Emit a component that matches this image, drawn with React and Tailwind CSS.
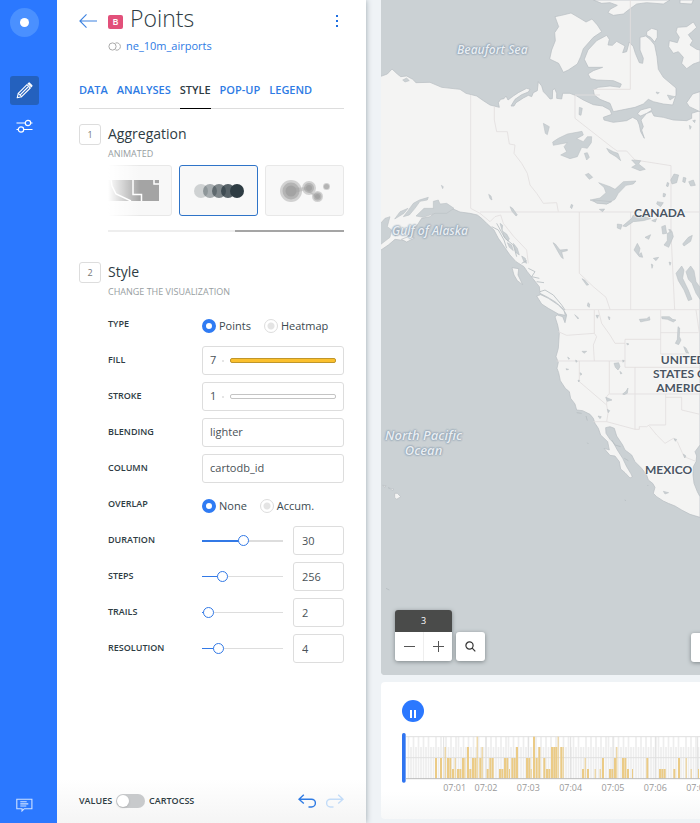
import React, { useState } from "react";

const FONT = "font-['Open_Sans','Noto_Sans',sans-serif]";

/* ---------- Left rail ---------- */

function Sidebar() {
  return (
    <nav className="z-20 flex w-[57px] shrink-0 flex-col items-start bg-[#2b78ff] px-[10px] pt-2 pb-1" aria-label="Main">
      <a href="#home" aria-label="Home" className="flex h-[29px] w-[29px] items-center justify-center rounded-full bg-[#4a90ff]">
        <span className="h-[9px] w-[9px] rounded-full bg-white" />
      </a>
      <button type="button" aria-label="Edit" className="mt-[39px] flex h-[29px] w-[29px] items-center justify-center rounded-[3px] bg-[#2461be]">
        <svg width="17" height="17" viewBox="0 0 17 17" fill="none" stroke="#fff" strokeWidth="1.1" strokeLinejoin="round" strokeLinecap="round">
          <path d="M1.2 15.8 2.3 11.4 11 2.7 14.3 6 5.6 14.7Z" />
          <path d="M2.3 11.4 5.6 14.7M4.2 12.8 12 5" />
          <path d="M12.2 1.5 13.2.9 16 3.7 15.4 4.8Z" fill="#fff" />
        </svg>
      </button>
      <button type="button" aria-label="Settings" className="mt-[7px] flex h-[29px] w-[29px] items-center justify-center">
        <svg width="17" height="15" viewBox="0 0 17 15" fill="none" stroke="#fff" strokeWidth="1.2">
          <path d="M.5 4h8.7M14.7 4h1.8M.5 10.5h1.8M7.8 10.5h8.7" />
          <circle cx="12" cy="4" r="2.7" />
          <circle cx="5" cy="10.5" r="2.7" />
        </svg>
      </button>
      <button type="button" aria-label="Feedback" className="mt-auto flex h-[29px] w-[29px] items-center justify-center">
        <svg width="17" height="14" viewBox="0 0 17 14" fill="none" stroke="#cfe1ff" strokeWidth="1.1">
          <path d="M.8 1.2h15.1v9.5H8.3L6 13V10.700H.8Z" />
          <path d="M4.300 3.800h6.400M4.300 5.900h8M4.300 8h6" />
        </svg>
      </button>
    </nav>
  );
}

/* ---------- Panel pieces ---------- */

const TABS = ["DATA", "ANALYSES", "STYLE", "POP-UP", "LEGEND"];

function Header() {
  return (
    <header className="flex h-[57px] items-start pt-[5px]">
      <button type="button" aria-label="Back" className="mt-[9px] w-[29px]">
        <svg width="18" height="14" viewBox="0 0 18 14" fill="none" stroke="#3d82e0" strokeWidth="1.100">
          <path d="M18 7H.9M7.500.4.9 7l6.600 6.600" />
        </svg>
      </button>
      <div className="min-w-0 flex-1">
        <div className="flex h-[26px] items-center gap-[7px]">
          <span className="mt-[8px] flex h-[14px] w-[15px] items-center justify-center rounded-[2px] bg-[#e2507a] text-[9px] font-semibold text-white">B</span>
          <h1 className="text-[23px] leading-[26px] font-light text-[#2e3c43]">Points</h1>
        </div>
        <div className="mt-[7px] flex h-4 items-center gap-[5px] text-[11px] leading-4">
          <svg width="13" height="9" viewBox="0 0 13 9" fill="none" stroke="#aaa">
            <circle cx="4.500" cy="4.500" r="3.600" />
            <path d="M7.500 1a3.700 3.700 0 1 1 0 7" />
          </svg>
          <a href="#dataset" className="text-[#2e7be4]">ne_10m_airports</a>
        </div>
      </div>
      <button type="button" aria-label="More options" className="mt-[10px] flex w-[14px] flex-col items-center gap-[3px]">
        <span className="h-[2px] w-[2px] bg-[#1f6fe0]" />
        <span className="h-[2px] w-[2px] bg-[#1f6fe0]" />
        <span className="h-[2px] w-[2px] bg-[#1f6fe0]" />
      </button>
    </header>
  );
}

function Tabs() {
  return (
    <div className="mt-[23px] flex h-[29px] gap-[9px] border-b border-[#ddd] text-[11px] leading-5 font-semibold">
      {TABS.map((t) => (
        <button
          key={t}
          type="button"
          className={t === "STYLE" ? "-mb-px border-b border-black pb-2 text-[#2e3c43]" : "pb-2 text-[#2e7be4]"}
        >
          {t}
        </button>
      ))}
    </div>
  );
}

function SectionTitle({ n, title, sub }) {
  return (
    <div className="flex">
      <span className="mt-[2px] flex h-[21px] w-[22px] items-center justify-center rounded-[3px] border border-[#ddd] text-[9px] text-[#777]">{n}</span>
      <div className="ml-[7px]">
        <h2 className="text-[14px] leading-6 text-[#2e3c43]">{title}</h2>
        <p className="text-[9px] leading-4 text-[#979ea1]">{sub}</p>
      </div>
    </div>
  );
}

function Card({ label, active, children }) {
  return (
    <button
      type="button"
      aria-label={label}
      aria-pressed={!!active}
      className={
        active
          ? "flex h-[51px] w-[79px] shrink-0 items-center justify-center rounded-[3px] border border-[#2f74c8] bg-[#f8f8f8]"
          : "flex h-[51px] w-[79px] shrink-0 items-center justify-center rounded-[3px] border border-[#e8e8e8] bg-[#f8f8f8]"
      }
    >
      {children}
    </button>
  );
}

function Aggregation() {
  return (
    <div className="relative ml-[29px]">
      <div className="mt-[3px] flex justify-end gap-[7px] overflow-hidden">
        <Card label="Regions">
          <svg width="52" height="21" viewBox="0 0 52 21">
            <path d="M0 0h52v21H0z" fill="#a4a4a4" />
            <path d="M4 0 5 6 9 14 24 21M26 0v14.500h8.500V21M47 0v4h5" fill="none" stroke="#fff" strokeWidth="1.500" />
          </svg>
        </Card>
        <Card label="Animated" active>
          <svg width="50" height="14" viewBox="0 0 50 14" fill="#2e3c43">
            <circle cx="7" cy="7" r="7" opacity=".2" />
            <circle cx="16" cy="7" r="7" opacity=".4" />
            <circle cx="25" cy="7" r="7" opacity=".6" />
            <circle cx="34" cy="7" r="7" opacity=".8" />
            <circle cx="43" cy="7" r="7" />
          </svg>
        </Card>
        <Card label="Heatmap">
          <svg width="50" height="24" viewBox="0 0 50 24" fill="#999">
            <g opacity=".4"><circle cx="11" cy="12" r="11" /><circle cx="29" cy="9" r="7" /><circle cx="37.500" cy="17.500" r="5.500" /><circle cx="46.500" cy="7.500" r="3.500" /></g>
            <g opacity=".5"><circle cx="11" cy="12" r="8.500" /><circle cx="29" cy="9" r="5" /><circle cx="37.500" cy="17.500" r="4" /><circle cx="46.500" cy="7.500" r="2.600" /></g>
            <g opacity=".6"><circle cx="11" cy="12" r="5.500" /><circle cx="29" cy="9" r="3" /><circle cx="37.500" cy="17.500" r="2.500" /><path d="M14 9l14-1v3l8 5-1 2-9-7-12 3z" opacity=".5" /></g>
          </svg>
        </Card>
      </div>
      <div className="pointer-events-none absolute top-0 left-0 h-[51px] w-8 bg-linear-to-r from-white to-white/0" />
      <div className="mt-[14px] flex h-[2px] justify-end bg-[#eee]">
        <span className="h-full w-[46%] bg-[#a5a5a5]" />
      </div>
    </div>
  );
}

function Row({ label, htmlFor, children }) {
  return (
    <div className="flex h-[29px] items-center">
      <label htmlFor={htmlFor} className="w-[94px] shrink-0 pb-[2px] text-[9px] leading-4 font-semibold text-[#2e3c43]">
        {label}
      </label>
      <div className="flex min-w-0 flex-1 items-center">{children}</div>
    </div>
  );
}

const BOX = "h-[29px] rounded-[3px] border border-[#ddd] bg-white text-[11px] text-[#4a5257]";

function Radios({ name, options }) {
  return (
    <div role="radiogroup" aria-label={name} className="flex gap-[13px] pt-[2px]">
      {options.map((o, i) => (
        <label key={o} className="flex items-center gap-[3px] text-[11px] leading-[14px] text-[#3c4a50]">
          <input
            type="radio"
            name={name}
            defaultChecked={i === 0}
            className="h-[14px] w-[14px] appearance-none rounded-full border border-[#ddd] bg-[radial-gradient(#e4e4e4_3px,#fff_4px)] checked:border-4 checked:border-[#2f7bf3] checked:bg-white checked:bg-none"
          />
          {o}
        </label>
      ))}
    </div>
  );
}

function ColorBox({ id, value, bar }) {
  return (
    <button type="button" id={id} className={"flex w-full items-center pr-[7px] pl-[7px] " + BOX}>
      <span className="w-3 text-left">{value}</span>
      <span className="h-[2px] w-[2px] rounded-full bg-[#ddd]" />
      <span className={"ml-[6px] h-[5px] flex-1 rounded-[2px] border " + bar} />
    </button>
  );
}

function SliderRow({ label, id, value, position, thick }) {
  const [pos, setPos] = useState(position);
  const stop = `calc(${pos}% + ${5 - pos / 10}px)`;
  return (
    <Row label={label} htmlFor={id}>
      <input
        type="range"
        aria-label={label + " slider"}
        value={pos}
        onChange={(e) => setPos(Number(e.target.value))}
        style={{ backgroundImage: `linear-gradient(to right, #3279e6 ${stop}, #ddd ${stop})` }}
        className={
          (thick ? "bg-[length:100%_2px] " : "bg-[length:100%_1px] ") +
          "h-[11px] min-w-0 flex-1 appearance-none bg-center bg-no-repeat [&::-webkit-slider-thumb]:h-[11px] [&::-webkit-slider-thumb]:w-[11px] [&::-webkit-slider-thumb]:appearance-none [&::-webkit-slider-thumb]:rounded-full [&::-webkit-slider-thumb]:border [&::-webkit-slider-thumb]:border-[#3279e6] [&::-webkit-slider-thumb]:bg-white"
        }
      />
      <input id={id} type="text" defaultValue={value} className={"ml-[10px] w-[51px] px-2 " + BOX} />
    </Row>
  );
}

function PanelFooter() {
  return (
    <footer className="mt-auto flex h-[44px] items-center bg-linear-to-b from-white to-[#f5f5f5] px-[22px] text-[9px] font-semibold text-[#2e3c43]">
      <label className="flex items-center gap-1">
        VALUES
        <input
          type="checkbox"
          role="switch"
          className="flex h-[14px] w-[29px] appearance-none items-center rounded-full bg-[#c8cacc] p-px before:h-3 before:w-3 before:rounded-full before:bg-white before:shadow-sm checked:justify-end"
        />
        CARTOCSS
      </label>
      <button type="button" aria-label="Undo" className="ml-auto">
        <svg width="18" height="14" viewBox="0 0 18 14" fill="none" stroke="#2e7be4" strokeWidth="1.400">
          <path d="M5.800.8 1 5.200l4.800 4.400M1 5.200h12.500a3.900 3.900 0 0 1 0 7.800H10.500" />
        </svg>
      </button>
      <button type="button" aria-label="Redo" className="ml-[10px]" disabled>
        <svg width="18" height="14" viewBox="0 0 18 14" fill="none" stroke="#c3dcf8" strokeWidth="1.400">
          <path d="M12.200.8 17 5.200l-4.800 4.400M17 5.200H4.500a3.900 3.900 0 0 0 0 7.800H7.500" />
        </svg>
      </button>
    </footer>
  );
}

function Panel() {
  return (
    <aside className="z-10 flex w-[309px] shrink-0 flex-col bg-white shadow-[0_0_6px_#9aa5ac]">
      <div className="px-[22px]">
        <Header />
        <Tabs />
        <section className="mt-[13px]">
          <SectionTitle n="1" title="Aggregation" sub="ANIMATED" />
          <Aggregation />
        </section>
        <section className="mt-[28px]">
          <SectionTitle n="2" title="Style" sub="CHANGE THE VISUALIZATION" />
          <div className="mt-[10px] ml-[29px] flex flex-col gap-[7px]">
            <Row label="TYPE"><Radios name="Type" options={["Points", "Heatmap"]} /></Row>
            <Row label="FILL" htmlFor="fill"><ColorBox id="fill" value="7" bar="border-[#c0962a] bg-[#fbc02d]" /></Row>
            <Row label="STROKE" htmlFor="stroke"><ColorBox id="stroke" value="1" bar="border-[#c4c4c4] bg-white" /></Row>
            <Row label="BLENDING" htmlFor="blending">
              <select id="blending" className={"w-full appearance-none px-[7px] " + BOX}><option>lighter</option></select>
            </Row>
            <Row label="COLUMN" htmlFor="column">
              <select id="column" className={"w-full appearance-none px-[7px] " + BOX}><option>cartodb_id</option></select>
            </Row>
            <Row label="OVERLAP"><Radios name="Overlap" options={["None", "Accum."]} /></Row>
            <SliderRow label="DURATION" id="duration" value="30" position={51} thick />
            <SliderRow label="STEPS" id="steps" value="256" position={21} />
            <SliderRow label="TRAILS" id="trails" value="2" position={1} />
            <SliderRow label="RESOLUTION" id="resolution" value="4" position={16} />
          </div>
        </section>
      </div>
      <PanelFooter />
    </aside>
  );
}

/* ---------- Map ---------- */

const LAND = [
  // mainland
  "M0 230 22 222 36 207 52 222 62 230 80 228 98 238 108 248 150 247 185 262 240 268 258 280 290 288 310 302 330 315 358 322 355 308 362 298 372 296 378 288 384 300 400 288 415 278 440 265 450 268 445 276 425 284 405 298 393 318 402 318 408 308 430 294 445 286 455 290 460 278 472 272 475 245 485 258 490 275 500 285 510 297 517 296 518 270 524 266 530 280 530 295 545 297 548 280 570 280 590 288 610 300 640 314 668 318 690 330 695 343 670 352 672 360 700 367 740 362 758 352 772 360 778 375 782 395 793 415 785 390 790 380 783 360 800 340 815 335 822 348 850 352 880 360 920 362 935 355 935 340 960 332V1335L945 1355 950 1368 948 1385 940 1400 939 1425 942 1450 952 1475 960 1490V1552L930 1543 905 1530 885 1518 865 1510 850 1503 830 1490 820 1480 825 1462 818 1450 805 1440 800 1425 785 1405 765 1385 755 1365 735 1350 728 1335 718 1320 710 1308 703 1285 690 1280 677 1283 678 1300 690 1318 700 1328 712 1350 728 1375 740 1400 752 1420 757 1430 750 1434 735 1418 722 1407 718 1385 705 1368 690 1366 672 1345 688 1350 683 1325 662 1305 655 1285 645 1270 640 1255 630 1243 608 1232 590 1230 585 1212 572 1195 568 1175 556 1165 541 1142 536 1118 531 1105 535 1087 528 1070 535 1045 538 1000 533 975 525 950 532 945 548 950 555 968 560 945 548 925 525 905 500 890 480 880 478 860 462 840 442 815 432 800 408 785 390 765 376 745 355 715 342 690 320 670 305 655 292 645 270 640 240 636 215 625 190 632 165 638 150 650 125 655 112 675 90 700 75 722 45 718 25 735 0 752Z",
  // arctic islands
  "M525 50 545 46 573 39 600 55 618 66 636 57 652 75 665 95 640 112 610 146 602 170 592 192 565 210 550 217 536 190 509 177 515 150 526 122 524 98 536 80Z",
  "M613 178 624 150 650 122 680 106 688 118 684 135 697 136 710 124 735 138 728 158 740 155 748 126 760 140 766 160 778 188 788 190 790 175 780 150 780 112 797 108 810 118 824 135 831 170 835 208 850 232 888 264 888 285 878 315 850 312 820 305 805 298 790 312 765 322 735 328 700 335 690 310 660 298 643 285 640 270 655 262 690 258 720 262 724 252 700 242 650 240 632 236 624 222 640 212 668 202 625 202Z",
  "M800 95 815 85 832 90 832 112 824 126 812 112 800 106Z",
  "M868 122 892 128 898 112 888 96 892 82 920 80 940 66 950 82 935 96 925 104 938 122 930 135 950 148 960 150V185L940 192 920 206 905 190 910 172 895 155 880 160 866 140Z",
  "M640 0 665 10 690 8 712 16 690 28 684 38 700 46 730 42 745 30 770 12 800 8 850 12 870 0Z",
  "M900 0V10L935 12 940 0Z",
  "M960 275 938 282 920 308 928 320 960 335Z",
  "M772 342 782 330 812 322 816 330 800 340 782 348Z",
  // pacific islands
  "M470 888 482 884 505 895 535 915 552 932 556 946 535 942 505 925 485 912Z",
  "M396 803 416 806 414 825 428 854 412 842 402 825Z",
  "M44 1480 52 1480 62 1490 50 1498 44 1492Z",
  "M8 1456 18 1457 15 1462ZM24 1463 42 1468 38 1471Z",
  "M64 718 90 708 104 714 80 726Z",
];

const WATER = [
  "M518 426 535 415 562 402 606 394 610 405 590 416 610 425 622 410 635 410 634 428 622 445 605 442 592 470 570 476 542 465 560 455 552 440 562 428 520 436Z",
  "M630 600 660 594 678 578 672 562 656 548 690 560 705 568 730 545 768 543 760 552 738 556 715 580 705 598 680 612 650 608Z",
  "M490 370 508 380 502 404 496 400Z",
  "M598 322 607 325 603 346 597 344Z",
  "M680 445 700 455 714 460 722 482 708 470 688 458Z",
  "M613 460 622 458 628 472 620 480Z",
  "M755 480 782 482 776 492 796 508 780 512 755 502 768 494Z",
  "M616 524 626 520 638 532 628 538Z",
  "M872 540 882 522 896 525 890 548 876 552Z",
  "M926 545 940 540 946 556 932 558Z",
  "M910 532 918 534 915 548 908 545Z",
  "M862 547 867 550 864 560 859 558ZM850 580 857 582 855 590 849 590ZM832 605 850 608 842 620 830 612Z",
  "M640 600 695 605 680 612 650 610Z",
  "M728 678 755 655 760 645 795 650 812 656 790 662 760 665 738 680Z",
  "M712 672 726 674 722 688 712 684ZM815 662 830 656 826 666Z",
  "M862 700 876 694 880 710 866 742 852 735 862 722ZM845 680 856 676 860 700 848 702Z",
  "M908 732 925 712 937 706 932 724 912 738Z",
  "M762 750 772 730 780 745 776 764 784 758 788 772 778 770ZM795 712 812 704 806 718Z",
  "M820 775 836 772 828 782ZM814 792 819 795 816 805ZM866 688 874 690 870 696ZM867 786 873 788 870 796Z",
  "M888 820 905 798 912 810 908 835 925 870 936 898 925 902 912 870 895 842Z",
  "M918 815 932 798 942 812 948 845 960 862V898L948 880 936 850 925 838Z",
  "M519 728 526 732 540 750 562 748 562 752 545 756 550 776 544 772 534 755Z",
  "M390 620 398 625 412 645 408 648 396 634Z",
  "M326 583 333 588 336 600 330 596ZM184 556 190 560 188 566ZM574 613 579 616 575 626 571 622ZM658 628 674 627 668 635Z",
  "M606 836 614 840 626 854 620 856ZM624 908 629 912 628 922 622 918ZM584 944 596 954 594 957ZM648 946 656 946 652 955ZM684 950 690 952 688 960Z",
  "M778 958 800 956 808 950 810 960 790 964 782 966Z",
  "M845 950 868 950 878 958 888 960 880 966 862 958 846 956Z",
  "M894 980 899 984 898 1010 903 1020 896 1034 886 1030 892 1018ZM911 1040 918 1044 926 1060 918 1058Z",
  "M702 1090 716 1088 720 1100 714 1110 706 1102ZM720 1114 726 1120 722 1122Z",
  "M728 1182 738 1174 744 1164 742 1180 732 1184ZM677 1192 688 1196 696 1200 682 1204Z",
  "M606 1054 620 1054 612 1060ZM563 1071 569 1076 566 1078ZM587 1080 592 1084 588 1087ZM558 1106 566 1108 560 1110ZM600 1118 606 1122 602 1126ZM740 1030 747 1032 742 1035ZM728 1080 733 1082 729 1087ZM594 1140 599 1142 596 1146Z",
  "M654 1248 664 1250 660 1256ZM682 1228 689 1232 685 1238ZM882 1316 890 1318 886 1324ZM910 1362 918 1368 914 1374ZM850 1474 866 1478 855 1482Z",
  "M44 657 60 635 84 625 72 640ZM84 632 100 610 118 600 145 592 142 600 120 604 105 625 88 645 70 650ZM108 648 132 625 160 625 160 604 175 600 180 612 200 610 222 625 200 640 165 640 130 652Z",
  "M0 672 15 655 30 650 22 680 35 690 30 712 0 735ZM40 692 60 680 62 700 45 708Z",
  "M360 670 368 676 366 692 380 702 388 716 384 724 372 710ZM382 728 395 735 400 752 388 742ZM400 730 412 745 418 765 408 758ZM425 768 436 775 440 790 432 786Z",
  "M68 240 80 234 88 242 75 246ZM828 276 838 278 832 282ZM862 285 885 290 870 300ZM928 376 934 380 930 388ZM938 362 946 360 944 368Z",
];

const BORDERS =
  "M272 285V625L300 640 330 665 345 650 362 645 370 670 400 708 440 750 445 790M343 320V360L350 395H382L388 432 405 435 402 460 425 490 442 520 450 555 470 580 490 610 530 608 535 635M300 636H960M598 636V820L640 860 678 892 690 928M752 636V929M585 285V355L700 445 712 453H740L765 480 873 497V700L884 929M751 0V268H640M585 285H660M555 929H960M643 930V1000L560 1006 535 995M643 1000 650 1010 640 1035 643 1083M530 1083H737M598 1083V1145L680 1215 684 1240 680 1265M688 1083V1180L680 1190V1215M655 930 665 970 690 1005 705 1030H735M842 1018H735V1102H960M842 930V1062H920M842 998H955M948 930 958 998M765 1102V1288M688 1182H960M857 1182V1275M857 1192H905V1230L960 1243M640 1265H680L765 1288H778V1280H800L808 1275H857M808 1278 830 1305 855 1330 880 1315 892 1325 912 1370 945 1383";

function MapArt() {
  return (
    <svg className="h-full w-full" viewBox="3 0 957 2025" preserveAspectRatio="xMinYMin slice" aria-hidden="true">
      <path d="M0 0H960V2025H0Z" fill="#cbd1d4" />
      <g fill="#f4f4f3" stroke="#b6bdc1" strokeWidth="2" strokeLinejoin="round">
        {LAND.map((d) => <path key={d} d={d} />)}
      </g>
      <path d={BORDERS} fill="none" stroke="#e2dfdf" strokeWidth="2.500" />
      <g fill="#cbd1d4" stroke="#b6bdc1" strokeWidth="1.500" strokeLinejoin="round">
        {WATER.map((d) => <path key={d} d={d} />)}
      </g>
      <g fill="none" stroke="#b6bdc1" strokeWidth="2.500">
        <path d="M335 680 355 690 372 720 380 745M350 670 375 715 400 735 410 770M445 805 465 815 455 830 478 835M470 845 492 848M480 875 495 870 520 885 545 915 555 930M440 782 425 790M733 1375 745 1382M695 1320 705 1335 722 1340" />
        <path d="M590 1238 605 1240M618 1248 622 1262M622 1328 625 1332M802 1455 805 1458M734 1500 738 1502M18 1765 28 1770" />
      </g>
    </svg>
  );
}

const SEA =
  "absolute text-center font-['Open_Sans','Noto_Sans',sans-serif] font-semibold italic whitespace-nowrap text-[#e9eef2] [text-shadow:0_0_2px_#8ea0b3,0_0_2px_#8ea0b3,0_0_2px_#8ea0b3]";
const COUNTRY =
  "absolute text-center font-[Lato,sans-serif] text-[12px] leading-[14px] font-bold whitespace-nowrap text-[#4a5563] [text-shadow:0_0_2px_#fff,0_0_2px_#fff]";
const TOOL = "flex h-[29px] items-center justify-center bg-white";

function MapView() {
  return (
    <main className="relative min-h-0 flex-1 overflow-hidden rounded-bl-[4px] bg-[#cbd1d4]">
      <div className="absolute inset-0"><MapArt /></div>

      <span className={SEA + " top-[42px] left-[76px] text-[12px] leading-4"}>Beaufort Sea</span>
      <span className={SEA + " top-[223px] left-[11px] text-[12px] leading-4"}>Gulf of Alaska</span>
      <span className={SEA + " top-[428px] left-[4px] text-[13px] leading-[15px]"}>North Pacific<br />Ocean</span>
      <span className={COUNTRY + " top-[206px] left-[253px]"}>CANADA</span>
      <span className={COUNTRY + " top-[353px] left-[272px]"}>UNITED<br />STATES OF<br />AMERICA</span>
      <span className={COUNTRY + " top-[463px] left-[264px]"}>MEXICO</span>

      <div className="absolute bottom-[14px] left-[14px] flex items-end gap-1">
        <div className="w-[57px] overflow-hidden rounded-[3px] shadow-[0_1px_4px_#7d8588]">
          <div className="flex h-[22px] items-center justify-center bg-[#4a4b4a] text-[9px] text-white">3</div>
          <div className="flex">
            <button type="button" aria-label="Zoom out" className={TOOL + " flex-1 border-r border-[#eee]"}>
              <svg width="11" height="11" stroke="#555"><path d="M0 5.500h11" /></svg>
            </button>
            <button type="button" aria-label="Zoom in" className={TOOL + " flex-1"}>
              <svg width="11" height="11" stroke="#555"><path d="M0 5.500h11M5.500 0v11" /></svg>
            </button>
          </div>
        </div>
        <button type="button" aria-label="Search" className={TOOL + " w-[29px] rounded-[3px] shadow-[0_1px_4px_#7d8588]"}>
          <svg width="11" height="11" viewBox="0 0 11 11" fill="none" stroke="#333" strokeWidth="1.200">
            <circle cx="4.500" cy="4.500" r="3.600" />
            <path d="M7.200 7.200 10.300 10.300" />
          </svg>
        </button>
      </div>
      <button type="button" aria-label="Map options" className={TOOL + " absolute bottom-[13px] left-[310px] w-[29px] rounded-[3px] shadow-[0_1px_4px_#7d8588]"} />
    </main>
  );
}

/* ---------- Time series ---------- */

// [x, units] pairs; one unit is a quarter of the chart height
const BARS = [
  [165, 2], [180, 2], [194, 3], [201, 2], [208, 2], [216, 1], [224, 2], [231, 1], [238, 1], [246, 2], [253, 2], [261, 3], [268, 1],
  [276, 2], [283, 2], [290, 4], [298, 2], [305, 3], [320, 1], [328, 2], [335, 2], [357, 1], [364, 1], [372, 2], [379, 2], [387, 1],
  [394, 2], [401, 2], [408, 3], [438, 2], [445, 2], [452, 1], [459, 4], [467, 2], [475, 3], [490, 2], [498, 1], [505, 1], [513, 3],
  [520, 3], [526, 3], [533, 4], [541, 3], [548, 3], [606, 1], [614, 2], [621, 1], [644, 1], [659, 1], [666, 2], [687, 1], [694, 1],
  [702, 2], [709, 3], [726, 2], [733, 2], [741, 1], [756, 1], [799, 2], [837, 1], [844, 1], [851, 1], [880, 1], [894, 2], [917, 2],
  [932, 1], [954, 1],
];
const THIN = [194, 224, 253, 290, 305, 387, 452, 533, 548, 614, 644, 659, 709, 756, 917, 932, 954];
const HEIGHT_TOP = [296, 267, 234, 201, 170];
const GHOST = Array.from({ length: 118 }, (_, i) => ({
  x: 83 + i * 7.5,
  top: (i * 7 + (i % 5) * 3) % 4 < 2 ? 170 : 201,
}));
const TICKS = [
  ["07:01", 224], ["07:02", 318], ["07:03", 445], ["07:04", 572], ["07:05", 699], ["07:06", 826], ["07:07", 953],
];

function TimeSeries() {
  return (
    <section aria-label="Time series" className="mt-[7px] mb-1 h-[137px] overflow-hidden rounded-l-[4px] bg-linear-to-b from-white from-80% to-[#f7f8f8] pt-[18px] pl-[21px]">
      <button type="button" aria-label="Pause" className="flex h-[22px] w-[22px] items-center justify-center gap-[2px] rounded-full bg-[#2b78ff] pt-[5px]">
        <span className="h-2 w-[2px] bg-white" />
        <span className="h-2 w-[2px] bg-white" />
      </button>
      <svg className="mt-[10px] block" width="298" height="65" viewBox="66 156 894 195">
        {GHOST.map((g) => <rect key={g.x} x={g.x} y={g.top} width="5" height={296 - g.top} fill="#eeeeee" />)}
        <path d="M78 170H960M78 233H960M191 170V296M318 170V296M445 170V296M572 170V296M699 170V296M826 170V296M953 170V296" stroke="#e0e0e0" strokeWidth="3" />
        {BARS.map(([x, u]) => (
          <rect key={x} x={x} y={HEIGHT_TOP[u]} width={THIN.includes(x) ? 3 : 6} height={296 - HEIGHT_TOP[u]} fill="#ebcb86" />
        ))}
        <path d="M78 296H960" stroke="#bbb" strokeWidth="3" />
        <rect x="66" y="159" width="11" height="149" rx="5" fill="#2f74f0" />
        {TICKS.map(([t, x]) => (
          <text key={t} x={x} y="333" textAnchor="middle" fontSize="27" fill="#999" className="font-['Open_Sans','Noto_Sans',sans-serif]">{t}</text>
        ))}
      </svg>
    </section>
  );
}

export default function App() {
  return (
    <div className={"flex h-screen min-h-[720px] overflow-hidden bg-[#eff3f6] " + FONT}>
      <Sidebar />
      <Panel />
      <div className="flex min-w-0 flex-1 flex-col pl-[15px]">
        <MapView />
        <TimeSeries />
      </div>
    </div>
  );
}
